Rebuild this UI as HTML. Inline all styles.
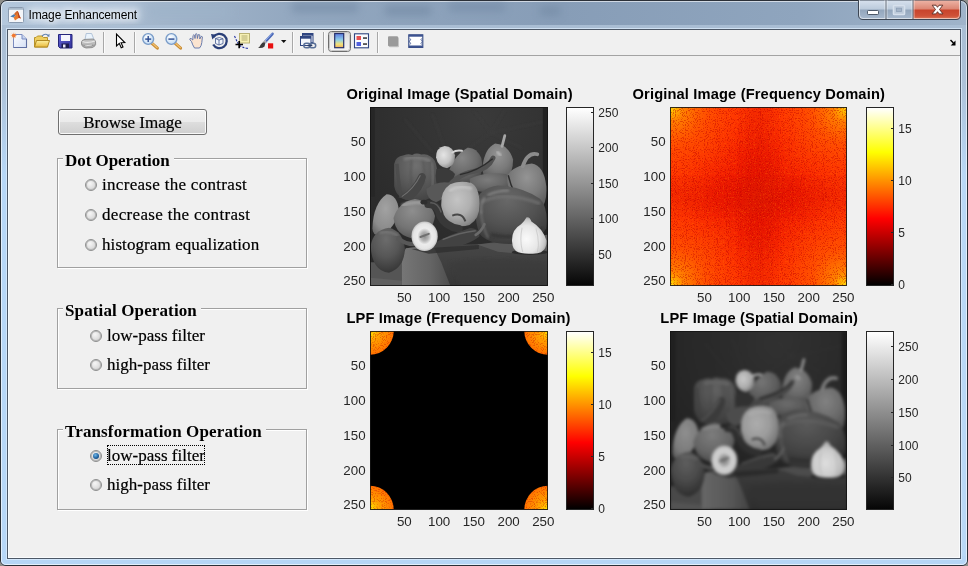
<!DOCTYPE html>
<html>
<head>
<meta charset="utf-8">
<title>Image Enhancement</title>
<style>
html,body{margin:0;padding:0;}
body{width:968px;height:566px;overflow:hidden;position:relative;background:#8e8e8a;font-family:"Liberation Sans",sans-serif;}
#frame{position:absolute;left:0;top:0;width:968px;height:566px;box-sizing:border-box;border-radius:7px 7px 6px 6px;
 background:linear-gradient(90deg,#b4c8dd 0px,#a6b9ce 130px,#92a7bf 300px,#879db7 560px,#8fa5be 800px,#a0b4ca 968px);
 border:1px solid #2b3038;overflow:hidden;}
#frame .hl{position:absolute;left:0;top:0;right:0;bottom:0;border:1px solid rgba(255,255,255,.6);border-radius:6px 6px 5px 5px;}
#frame .side{position:absolute;left:0;top:30px;right:0;bottom:0;background:linear-gradient(90deg,#b7d7f7 0,#b7d7f7 8px,transparent 8px,transparent 958px,#b9d8f6 958px);}
#frame .sideg{position:absolute;left:0;top:24px;right:0;height:150px;background:linear-gradient(180deg,#a9bdd3 0,#adc2d9 40%,rgba(183,215,247,0) 100%);}
#frame .bot{position:absolute;left:0;height:9px;right:0;bottom:0;background:#b6d6f6;}
#client{position:absolute;left:8px;top:30px;width:952px;height:528px;background:#f0f0f0;box-shadow:0 0 0 1px #4c5766, 0 0 0 2px rgba(220,236,252,0.75), inset 0 0 0 1px #f9fbfd;}
#toolbar{position:absolute;left:0;top:0;width:952px;height:25px;background:#f0f0f0;border-bottom:1px solid #a3a3a3;}
#title{position:absolute;left:28.5px;top:8px;font-size:12px;line-height:14px;color:#000;white-space:nowrap;letter-spacing:-0.13px;text-shadow:0 0 6px #fff,0 0 9px #fff,0 0 12px rgba(255,255,255,.9);}
.btn{position:absolute;left:58px;top:109px;width:149px;height:26px;box-sizing:border-box;border:1px solid #707070;border-radius:3px;
 background:linear-gradient(#f2f2f2 0%,#ebebeb 48%,#dddddd 52%,#cfcfcf 100%);box-shadow:inset 0 0 0 1px rgba(255,255,255,.85);}
.btn span{position:absolute;left:0;right:0;top:3px;text-align:center;font-family:"Liberation Serif",serif;font-size:17px;line-height:19px;color:#000;-webkit-text-stroke:0.2px #000;}
.panel{position:absolute;box-sizing:border-box;border:1px solid #a0a0a0;box-shadow:inset 1px 1px 0 #fff, 1px 1px 0 #fff;}
.ptitle{position:absolute;left:5px;top:-6.5px;height:16px;background:#f0f0f0;padding:0 4px 0 2px;font-family:"Liberation Serif",serif;font-weight:bold;font-size:17px;line-height:16px;color:#000;white-space:nowrap;}
.radio{position:absolute;width:10px;height:10px;border-radius:50%;border:1px solid #8e8f8f;background:radial-gradient(circle at 40% 35%,#f6f6f6 0,#dedede 55%,#c4c4c4 100%);box-shadow:inset 0 0 0 1px #b8b8b8;}
.radio.on:after{content:"";position:absolute;left:2px;top:2px;width:6px;height:6px;border-radius:50%;background:radial-gradient(circle at 40% 35%,#6fb7e8 0,#1b5c9a 60%,#12365f 100%);}
.rl{position:absolute;font-family:"Liberation Serif",serif;font-size:17px;line-height:19px;color:#000;white-space:nowrap;-webkit-text-stroke:0.2px #000;}
.tk{position:absolute;font-size:13.33px;line-height:14px;color:#262626;white-space:nowrap;}
.tk.cbl{font-size:12px;letter-spacing:0.1px;}
.tk.r{text-align:right;width:40px;}
.tk.c{text-align:center;width:40px;}
.ttl{position:absolute;font-size:14.67px;font-weight:bold;line-height:16px;color:#000;white-space:nowrap;letter-spacing:0.15px;}
.ax{position:absolute;box-sizing:border-box;}
.cb{position:absolute;box-sizing:border-box;border:1px solid #262626;}
svg{position:absolute;overflow:visible;}
</style>
</head>
<body>
<div id="root" style="position:absolute;left:0;top:0;width:968px;height:566px;will-change:transform;">
<div id="frame"><div class="side"></div><div class="sideg"></div><div class="bot"></div><div class="hl"></div></div>
<svg width="968" height="30" viewBox="0 0 968 30" style="left:0;top:0"><defs><linearGradient id="cbtn" x1="0" y1="0" x2="0" y2="1"><stop offset="0" stop-color="#d8e2ee"/><stop offset="0.45" stop-color="#bccbdc"/><stop offset="0.5" stop-color="#93a6bc"/><stop offset="1" stop-color="#a9bbd0"/></linearGradient><linearGradient id="cred" x1="0" y1="0" x2="0" y2="1"><stop offset="0" stop-color="#eeb6a8"/><stop offset="0.45" stop-color="#dc8674"/><stop offset="0.5" stop-color="#c8442c"/><stop offset="0.8" stop-color="#cf5238"/><stop offset="1" stop-color="#e08a6a"/></linearGradient><filter id="tblur"><feGaussianBlur stdDeviation="4"/></filter><clipPath id="capclip"><path d="M858.5,0 H960.5 V15 Q960.5,19.5 956,19.5 H863 Q858.5,19.5 858.5,15 Z"/></clipPath></defs><g filter="url(#tblur)" opacity="0.6"><rect x="292" y="3" width="66" height="9" fill="#6f86a2"/><rect x="385" y="6" width="46" height="9" fill="#6d849f"/><rect x="449" y="3" width="56" height="8" fill="#6f86a2"/><rect x="540" y="7" width="20" height="8" fill="#6d849f"/><rect x="150" y="6" width="80" height="12" fill="#9db3c9"/><rect x="30" y="4" width="110" height="18" fill="#c8d8ea"/></g><rect x="8.5" y="7.5" width="15" height="15" rx="1" fill="#f4f6f9" stroke="#8a9bb0" stroke-width="1"/><rect x="9" y="8" width="14" height="1.8" fill="#a9bacb"/><path d="M10.2,16.4 L14.2,14 L15.8,15.6 L13.6,17.6 Z" fill="#4a7fb4"/><path d="M14.2,14 Q16.2,11.5 17.2,10.9 Q18,11 18.6,13 Q19.6,16.5 20.9,18.6 Q19.6,17.6 18.4,18.2 Q16.8,19.2 15,20.4 Q14.4,19 13.6,17.6 Q14.8,16.6 15.8,15.6 Z" fill="#e87a2c"/><path d="M17.2,10.9 Q18,11 18.6,13 Q19.6,16.5 20.9,18.6 Q19.6,17.6 18.6,18 Q18.2,14.5 17.2,10.9 Z" fill="#b03a1e"/><path d="M14.2,14 Q16.2,11.5 17.2,10.9 Q17,13.5 15.8,15.6 Z" fill="#c8602a" opacity="0.8"/><g clip-path="url(#capclip)"><rect x="858" y="0" width="28" height="20" fill="url(#cbtn)"/><rect x="886" y="0" width="27" height="20" fill="url(#cbtn)"/><rect x="913" y="0" width="48" height="20" fill="url(#cred)"/></g><path d="M858.5,0 H960.5 V15 Q960.5,19.5 956,19.5 H863 Q858.5,19.5 858.5,15 Z" fill="none" stroke="#3c4654" stroke-width="1"/><path d="M859.5,0 V15 Q859.5,18.5 863,18.5 H956 Q959.5,18.5 959.5,15 V0" fill="none" stroke="rgba(255,255,255,0.55)" stroke-width="1"/><path d="M886,0 V19 M913,0 V19" stroke="#3c4654" stroke-width="1"/><path d="M887,0 V18.5 M885,0 V18.5 M914,0 V18.5 M912,0 V18.5" stroke="rgba(255,255,255,0.5)" stroke-width="1"/><rect x="867.5" y="10.5" width="11" height="4" rx="0.8" fill="#ffffff" stroke="#4c5868" stroke-width="1"/><rect x="893.5" y="5.5" width="11" height="9" rx="0.8" fill="#bccada" stroke="#d6e0ec" stroke-width="1.6"/><rect x="896.5" y="8.2" width="5" height="3.2" fill="#a4b4c8" stroke="#8d9fb6" stroke-width="0.8"/><path d="M932.2,5.2 L936,5.2 L937.5,7.3 L939,5.2 L942.8,5.2 L939.5,9.5 L943,13.9 L939.1,13.9 L937.5,11.7 L935.9,13.9 L932,13.9 L935.5,9.5 Z" fill="#ffffff" stroke="#5a2a22" stroke-width="0.9" stroke-linejoin="round"/></svg>
<div id="title">Image Enhancement</div>
<div id="client"><div id="toolbar"></div></div>
<svg width="968" height="60" viewBox="0 0 968 60" style="left:0;top:0"><defs><linearGradient id="tPage" x1="0" y1="0" x2="1" y2="1"><stop offset="0" stop-color="#ffffff"/><stop offset="1" stop-color="#d4dff5"/></linearGradient><linearGradient id="tFold" x1="0" y1="0" x2="0" y2="1"><stop offset="0" stop-color="#fdf0a0"/><stop offset="1" stop-color="#e9b93a"/></linearGradient><linearGradient id="tSave" x1="0" y1="0" x2="1" y2="1"><stop offset="0" stop-color="#6464d4"/><stop offset="1" stop-color="#32329a"/></linearGradient><linearGradient id="tCb" x1="0" y1="0" x2="0" y2="1"><stop offset="0" stop-color="#5a78e0"/><stop offset="0.45" stop-color="#8fd0e8"/><stop offset="0.75" stop-color="#f2e27a"/><stop offset="1" stop-color="#f0b060"/></linearGradient><linearGradient id="tPress" x1="0" y1="0" x2="0" y2="1"><stop offset="0" stop-color="#d9d9d9"/><stop offset="0.5" stop-color="#ececec"/><stop offset="1" stop-color="#f6f6f6"/></linearGradient><radialGradient id="tLens" cx="0.4" cy="0.35" r="0.7"><stop offset="0" stop-color="#ffffff"/><stop offset="1" stop-color="#bcd8f4"/></radialGradient></defs><rect x="103.0" y="32" width="1" height="21" fill="#a8a8a8"/><rect x="104.0" y="32" width="1" height="21" fill="#fbfbfb"/><rect x="134.0" y="32" width="1" height="21" fill="#a8a8a8"/><rect x="135.0" y="32" width="1" height="21" fill="#fbfbfb"/><rect x="292.0" y="32" width="1" height="21" fill="#a8a8a8"/><rect x="293.0" y="32" width="1" height="21" fill="#fbfbfb"/><rect x="323.0" y="32" width="1" height="21" fill="#a8a8a8"/><rect x="324.0" y="32" width="1" height="21" fill="#fbfbfb"/><rect x="377.0" y="32" width="1" height="21" fill="#a8a8a8"/><rect x="378.0" y="32" width="1" height="21" fill="#fbfbfb"/><path d="M13.5,34.5 H22 L26.5,39 V47.5 H13.5 Z" fill="url(#tPage)" stroke="#7b8cc0" stroke-width="1"/><path d="M22,34.5 V39 H26.5" fill="#c9d6f0" stroke="#7b8cc0" stroke-width="1"/><path d="M13.8,32.6 V38.6 M10.8,35.6 H16.8 M11.7,33.5 L15.9,37.7 M15.9,33.5 L11.7,37.7" stroke="#f4a870" stroke-width="0.7"/><circle cx="13.8" cy="35.6" r="1.9" fill="#f07830"/><path d="M26.5,39 V47.5 H13.5" fill="none" stroke="#5f6fa3" stroke-width="1.1"/><path d="M34.5,47 V37.5 H36 L37.5,36 H42 L43.5,37.5 H47.5 V47 Z" fill="#efcf60" stroke="#b8942c" stroke-width="1"/><path d="M34.5,47 L36.5,40.5 H49.5 L47.5,47 Z" fill="url(#tFold)" stroke="#b08820" stroke-width="1"/><path d="M42,36 Q45,32.8 48.3,35.4" fill="none" stroke="#6484b0" stroke-width="1.1"/><path d="M49.6,33.8 L49.3,37 L46.6,36 Z" fill="#6484b0"/><path d="M58.5,34.5 H72 V48 H60 L58.5,46.5 Z" fill="url(#tSave)" stroke="#24247a" stroke-width="1"/><rect x="61" y="35" width="9" height="6" fill="#f4f4fc"/><rect x="61.5" y="43.5" width="7.5" height="4.5" fill="#1c1c50"/><rect x="63" y="44.5" width="2.5" height="3" fill="#e8e8f8"/><path d="M84.8,40.5 L86.2,33.5 H91.6 L94,39.5 Z" fill="#eaf3fc" stroke="#9ab0cc" stroke-width="0.7"/><path d="M81.5,42 Q82,39.6 85,39.4 L93,39 Q95.6,40 95.6,42 V44.5 Q95,46.8 92,47.6 L86,48 Q82,47 81.5,44.5 Z" fill="#bdbdbd" stroke="#7c7c7c" stroke-width="0.8"/><path d="M82.5,41.5 Q88,43.5 95,41" fill="none" stroke="#e8e8e8" stroke-width="1.2"/><path d="M84,44.8 L92.5,44.2 L92,46.6 L85.5,47 Z" fill="#f2f2f2" stroke="#8a8a8a" stroke-width="0.5"/><path d="M82,44.5 Q87,48 95,44.8" fill="none" stroke="#8c8c8c" stroke-width="0.8"/><path d="M116.5,34 V46 L119.3,43.4 L121.2,47.8 L123,47 L121.1,42.7 L124.8,42.6 Z" fill="#ffffff" stroke="#000" stroke-width="1.1" stroke-linejoin="miter"/><path d="M152.0,43.3 L157.39999999999998,48.2" stroke="#c88a30" stroke-width="3" stroke-linecap="round"/><path d="M152.0,43 L157.2,47.7" stroke="#f0c070" stroke-width="1.2" stroke-linecap="round"/><circle cx="148.2" cy="39" r="5.4" fill="url(#tLens)" stroke="#7a9cc8" stroke-width="1.4"/><rect x="145.2" y="38.4" width="6" height="1.4" fill="#2a4a90"/><rect x="147.5" y="36" width="1.4" height="6" fill="#2a4a90"/><path d="M175.20000000000002,43.3 L180.6,48.2" stroke="#c88a30" stroke-width="3" stroke-linecap="round"/><path d="M175.20000000000002,43 L180.4,47.7" stroke="#f0c070" stroke-width="1.2" stroke-linecap="round"/><circle cx="171.4" cy="39" r="5.4" fill="url(#tLens)" stroke="#7a9cc8" stroke-width="1.4"/><rect x="168.4" y="38.4" width="6" height="1.4" fill="#2a4a90"/><path d="M191.5,41.5 Q189,39.5 190,38.6 Q191.2,38 192.8,40 L193,35.5 Q193.6,34.2 194.6,35.5 L195,38.5 L195.4,34.2 Q196.2,33 197,34.2 L197.4,38.5 L198.2,34.8 Q199,33.8 199.8,35 L199.8,39 L201,36.6 Q202,35.8 202.4,37 L201.8,42.5 Q201.5,46 199.5,48 H194.5 Q192.5,45 191.5,41.5 Z" fill="#fbe4d0" stroke="#5a70a8" stroke-width="0.9" stroke-linejoin="round"/><path d="M213.5,37 A7.2,7.2 0 1 1 213.2,44.5" fill="none" stroke="#2a3f78" stroke-width="2.3"/><path d="M211,34 L216.5,34.8 L212.4,39.6 Z" fill="#2a3f78"/><path d="M215.5,38.5 L219.5,37.5 L223,38.8 V43.5 L219,45 L215.5,43.5 Z M215.5,38.5 L219,40 L223,38.8 M219,40 V45" fill="#eef3fb" stroke="#44598f" stroke-width="0.8"/><rect x="239.5" y="33.5" width="10" height="9.5" fill="#f6f0b4" stroke="#b4ac6c" stroke-width="0.9"/><path d="M241.5,36 H247.5 M241.5,38 H247.5 M241.5,40 H247.5" stroke="#a49c62" stroke-width="0.8"/><path d="M234.5,36 L238,43.5 Q241,48 249,48.5" fill="none" stroke="#2030a0" stroke-width="1.1" stroke-dasharray="2.2,1.3"/><path d="M235.5,44.5 H243 M239.2,41 V48.2" stroke="#000" stroke-width="1.7"/><path d="M272.5,33.8 L265,42" stroke="#4a68b8" stroke-width="2.6" stroke-linecap="round"/><path d="M271.8,33.6 L265,41" stroke="#a8c0f0" stroke-width="0.9" stroke-linecap="round"/><path d="M265.8,40.8 L263.2,43.5" stroke="#b0b0b0" stroke-width="2.6"/><path d="M264.5,42.2 Q262,42 260.5,45 Q259.5,47.5 258,48 Q262.5,48.5 264.5,46.5 Q266,44.5 264.5,42.2 Z" fill="#3a3a3a"/><rect x="268" y="43.3" width="5.2" height="5.2" fill="#e81010"/><path d="M281,40 H286.4 L283.7,43 Z" fill="#111"/><rect x="302.5" y="33.5" width="10.5" height="9" fill="#f4f7fc" stroke="#2f4580" stroke-width="1"/><rect x="302.5" y="33.5" width="10.5" height="2.2" fill="#2f4580"/><rect x="300.5" y="36.5" width="10.5" height="9" fill="#f4f7fc" stroke="#2f4580" stroke-width="1"/><rect x="300.5" y="36.5" width="10.5" height="2.2" fill="#2f4580"/><rect x="303.8" y="43.2" width="6.5" height="4.6" rx="2.3" fill="none" stroke="#5a7098" stroke-width="1.5"/><rect x="309.2" y="43.2" width="6.5" height="4.6" rx="2.3" fill="none" stroke="#5a7098" stroke-width="1.5"/><rect x="307.5" y="44.8" width="4.8" height="1.4" fill="#2b3d66"/><rect x="328.5" y="31.5" width="22" height="20" rx="3" fill="url(#tPress)" stroke="#6e6e6e" stroke-width="1"/><rect x="329.5" y="32.5" width="20" height="18" rx="2" fill="none" stroke="#c8c8c8" stroke-width="1"/><rect x="334.7" y="33.5" width="9" height="14.2" fill="url(#tCb)" stroke="#27306a" stroke-width="1.2"/><rect x="354.5" y="33.8" width="14" height="14" fill="#fbfcff" stroke="#2f4580" stroke-width="1.1"/><rect x="356.5" y="36" width="4.5" height="4" fill="#e85050"/><rect x="356.5" y="42" width="4.5" height="4" fill="#5060e0"/><rect x="363" y="37.4" width="4" height="1.3" fill="#111"/><rect x="363" y="43.4" width="4" height="1.3" fill="#111"/><rect x="389" y="37.2" width="10" height="10" rx="1" fill="#c4c4c4"/><rect x="388" y="36.3" width="10" height="10" rx="1" fill="#9a9a9a"/><rect x="408.8" y="34.8" width="14" height="12.6" fill="#ffffff" stroke="#2f4580" stroke-width="1.1"/><rect x="408.8" y="34.8" width="14" height="1.9" fill="#3c5290"/><rect x="408.8" y="45.5" width="14" height="1.9" fill="#3c5290"/><path d="M410,38.5 q1.2,1 0,2 q-1.2,1 0,2 q1.2,1 0,2 M421.6,38.5 q-1.2,1 0,2 q1.2,1 0,2 q-1.2,1 0,2" fill="none" stroke="#3c5290" stroke-width="0.9"/><path d="M950.5,40 L953.5,43" stroke="#000" stroke-width="1.5"/><path d="M955.5,40.6 V45.4 H950.7 Z" fill="#000"/></svg>
<div class="btn"><span>Browse Image</span></div>
<div class="panel" style="left:57px;top:158px;width:250px;height:110px;"><div class="ptitle" style="letter-spacing:-0.05px">Dot Operation</div></div>
<div class="radio" style="left:85px;top:179px;"></div>
<div class="rl" style="left:102px;top:175px;letter-spacing:0.3px;">increase the contrast</div>
<div class="radio" style="left:85px;top:209px;"></div>
<div class="rl" style="left:102px;top:205px;letter-spacing:0.32px;">decrease the contrast</div>
<div class="radio" style="left:85px;top:239px;"></div>
<div class="rl" style="left:102px;top:235px;letter-spacing:0.09px;">histogram equalization</div>
<div class="panel" style="left:57px;top:308px;width:250px;height:81px;"><div class="ptitle" style="letter-spacing:0.12px">Spatial Operation</div></div>
<div class="radio" style="left:90px;top:330px;"></div>
<div class="rl" style="left:107px;top:326px;letter-spacing:0.02px;">low-pass filter</div>
<div class="radio" style="left:90px;top:359px;"></div>
<div class="rl" style="left:107px;top:355px;letter-spacing:0.03px;">high-pass filter</div>
<div class="panel" style="left:57px;top:429px;width:250px;height:81px;"><div class="ptitle" style="letter-spacing:0.13px">Transformation Operation</div></div>
<div class="radio on" style="left:90px;top:450px;"></div>
<div class="rl" style="left:107px;top:445px;letter-spacing:0.02px;outline:1px dotted #000;outline-offset:-1px;padding-top:1px;">low-pass filter</div>
<div class="radio" style="left:90px;top:479px;"></div>
<div class="rl" style="left:107px;top:475px;letter-spacing:0.03px;">high-pass filter</div>
<svg width="0" height="0" style="left:0;top:0"><defs><linearGradient id="gCloth" x1="0" y1="0" x2="0" y2="1"><stop offset="0" stop-color="#565656"/><stop offset="0.22" stop-color="#464646"/><stop offset="1" stop-color="#373737"/></linearGradient>
<linearGradient id="gClothL" x1="0" y1="0" x2="1" y2="0"><stop offset="0" stop-color="#767676"/><stop offset="0.6" stop-color="#646464"/><stop offset="1" stop-color="#4e4e4e"/></linearGradient>
<radialGradient id="gBg" cx="0.6" cy="0.1" r="0.75"><stop offset="0" stop-color="#3a3a3a"/><stop offset="0.6" stop-color="#303030"/><stop offset="1" stop-color="#292929"/></radialGradient>
<radialGradient id="gGar" cx="0.42" cy="0.6" r="0.62"><stop offset="0" stop-color="#fafafa"/><stop offset="0.6" stop-color="#e6e6e6"/><stop offset="0.85" stop-color="#c8c8c8"/><stop offset="1" stop-color="#9a9a9a"/></radialGradient>
<radialGradient id="gGar2" cx="0.4" cy="0.4" r="0.65"><stop offset="0" stop-color="#e4e4e4"/><stop offset="0.6" stop-color="#c4c4c4"/><stop offset="1" stop-color="#8a8a8a"/></radialGradient>
<radialGradient id="gMush" cx="0.5" cy="0.5" r="0.5"><stop offset="0" stop-color="#8c8c8c"/><stop offset="0.3" stop-color="#b4b4b4"/><stop offset="0.55" stop-color="#ececec"/><stop offset="0.85" stop-color="#e4e4e4"/><stop offset="1" stop-color="#c0c0c0"/></radialGradient>
<radialGradient id="gYel" cx="0.42" cy="0.4" r="0.7"><stop offset="0" stop-color="#c4c4c4"/><stop offset="0.5" stop-color="#b0b0b0"/><stop offset="0.85" stop-color="#8c8c8c"/><stop offset="1" stop-color="#707070"/></radialGradient>
<radialGradient id="gP1" cx="0.5" cy="0.25" r="0.8"><stop offset="0" stop-color="#707070"/><stop offset="0.5" stop-color="#5a5a5a"/><stop offset="1" stop-color="#404040"/></radialGradient>
<radialGradient id="gP2" cx="0.4" cy="0.3" r="0.75"><stop offset="0" stop-color="#868686"/><stop offset="0.6" stop-color="#6a6a6a"/><stop offset="1" stop-color="#4a4a4a"/></radialGradient>
<radialGradient id="gP3" cx="0.5" cy="0.3" r="0.8"><stop offset="0" stop-color="#949494"/><stop offset="0.5" stop-color="#7a7a7a"/><stop offset="1" stop-color="#525252"/></radialGradient>
<radialGradient id="gP4" cx="0.45" cy="0.35" r="0.8"><stop offset="0" stop-color="#7c7c7c"/><stop offset="0.5" stop-color="#686868"/><stop offset="1" stop-color="#484848"/></radialGradient>
<radialGradient id="gBig" cx="0.45" cy="0.25" r="0.85"><stop offset="0" stop-color="#686868"/><stop offset="0.5" stop-color="#525252"/><stop offset="1" stop-color="#343434"/></radialGradient>
<radialGradient id="gBL" cx="0.45" cy="0.25" r="0.8"><stop offset="0" stop-color="#6c6c6c"/><stop offset="0.5" stop-color="#565656"/><stop offset="1" stop-color="#323232"/></radialGradient>
<radialGradient id="gLY" cx="0.5" cy="0.35" r="0.7"><stop offset="0" stop-color="#a2a2a2"/><stop offset="0.7" stop-color="#8c8c8c"/><stop offset="1" stop-color="#6c6c6c"/></radialGradient>
<radialGradient id="gLM" cx="0.45" cy="0.3" r="0.75"><stop offset="0" stop-color="#8e8e8e"/><stop offset="0.6" stop-color="#747474"/><stop offset="1" stop-color="#525252"/></radialGradient>
<filter id="b1" x="-5%" y="-5%" width="110%" height="110%" color-interpolation-filters="sRGB"><feGaussianBlur stdDeviation="1.4"/></filter>
<filter id="b2" x="-5%" y="-5%" width="110%" height="110%" color-interpolation-filters="sRGB"><feGaussianBlur stdDeviation="4.2"/><feComponentTransfer><feFuncR type="linear" slope="0.9" intercept="-0.012"/><feFuncG type="linear" slope="0.9" intercept="-0.012"/><feFuncB type="linear" slope="0.9" intercept="-0.012"/></feComponentTransfer></filter>
<filter id="b3" x="-20%" y="-20%" width="140%" height="140%"><feGaussianBlur stdDeviation="2.5"/></filter>
<filter id="bs" x="-20%" y="-20%" width="140%" height="140%"><feGaussianBlur stdDeviation="5"/></filter><radialGradient id="hc0" gradientUnits="userSpaceOnUse" cx="0" cy="0" r="95"><stop offset="0" stop-color="#fff020"/><stop offset="0.05" stop-color="#ffc800" stop-opacity="0.95"/><stop offset="0.15" stop-color="#ff9000" stop-opacity="0.85"/><stop offset="0.4" stop-color="#ff6000" stop-opacity="0.6"/><stop offset="1" stop-color="#ff3000" stop-opacity="0"/></radialGradient>
<radialGradient id="lc0" gradientUnits="userSpaceOnUse" cx="0" cy="0" r="24"><stop offset="0" stop-color="#fff400"/><stop offset="0.15" stop-color="#ffd000"/><stop offset="0.4" stop-color="#ffa400"/><stop offset="0.75" stop-color="#ff8800"/><stop offset="1" stop-color="#ff7000"/></radialGradient>
<radialGradient id="hc1" gradientUnits="userSpaceOnUse" cx="178" cy="0" r="95"><stop offset="0" stop-color="#fff020"/><stop offset="0.05" stop-color="#ffc800" stop-opacity="0.95"/><stop offset="0.15" stop-color="#ff9000" stop-opacity="0.85"/><stop offset="0.4" stop-color="#ff6000" stop-opacity="0.6"/><stop offset="1" stop-color="#ff3000" stop-opacity="0"/></radialGradient>
<radialGradient id="lc1" gradientUnits="userSpaceOnUse" cx="178" cy="0" r="24"><stop offset="0" stop-color="#fff400"/><stop offset="0.15" stop-color="#ffd000"/><stop offset="0.4" stop-color="#ffa400"/><stop offset="0.75" stop-color="#ff8800"/><stop offset="1" stop-color="#ff7000"/></radialGradient>
<radialGradient id="hc2" gradientUnits="userSpaceOnUse" cx="0" cy="178" r="95"><stop offset="0" stop-color="#fff020"/><stop offset="0.05" stop-color="#ffc800" stop-opacity="0.95"/><stop offset="0.15" stop-color="#ff9000" stop-opacity="0.85"/><stop offset="0.4" stop-color="#ff6000" stop-opacity="0.6"/><stop offset="1" stop-color="#ff3000" stop-opacity="0"/></radialGradient>
<radialGradient id="lc2" gradientUnits="userSpaceOnUse" cx="0" cy="178" r="24"><stop offset="0" stop-color="#fff400"/><stop offset="0.15" stop-color="#ffd000"/><stop offset="0.4" stop-color="#ffa400"/><stop offset="0.75" stop-color="#ff8800"/><stop offset="1" stop-color="#ff7000"/></radialGradient>
<radialGradient id="hc3" gradientUnits="userSpaceOnUse" cx="178" cy="178" r="95"><stop offset="0" stop-color="#fff020"/><stop offset="0.05" stop-color="#ffc800" stop-opacity="0.95"/><stop offset="0.15" stop-color="#ff9000" stop-opacity="0.85"/><stop offset="0.4" stop-color="#ff6000" stop-opacity="0.6"/><stop offset="1" stop-color="#ff3000" stop-opacity="0"/></radialGradient>
<radialGradient id="lc3" gradientUnits="userSpaceOnUse" cx="178" cy="178" r="24"><stop offset="0" stop-color="#fff400"/><stop offset="0.15" stop-color="#ffd000"/><stop offset="0.4" stop-color="#ffa400"/><stop offset="0.75" stop-color="#ff8800"/><stop offset="1" stop-color="#ff7000"/></radialGradient>
<radialGradient id="hcen" gradientUnits="userSpaceOnUse" cx="89" cy="89" r="90"><stop offset="0" stop-color="#e20c00"/><stop offset="0.45" stop-color="#ee1400" stop-opacity="0.7"/><stop offset="1" stop-color="#fa2200" stop-opacity="0"/></radialGradient>
<filter id="bl6"><feGaussianBlur stdDeviation="9"/></filter>
<filter id="nz" x="0" y="0" width="100%" height="100%" color-interpolation-filters="sRGB"><feTurbulence type="fractalNoise" baseFrequency="0.9" numOctaves="1" seed="7" result="t"/><feColorMatrix type="matrix" values="0 0 0 0 0.74  0 0 0 0 0.0  0 0 0 0 0  8 8 0 0 -8.45"/></filter>
<filter id="nz2" x="0" y="0" width="100%" height="100%" color-interpolation-filters="sRGB"><feTurbulence type="fractalNoise" baseFrequency="0.8" numOctaves="1" seed="23" result="t"/><feColorMatrix type="matrix" values="0 0 0 0 1  0 0 0 0 0.42  0 0 0 0 0  0 6 6 0 -6.6"/></filter><g id="pepg"><rect x="0" y="0" width="581" height="566" fill="url(#gBg)"/>
<g stroke="#3e3e3e" stroke-width="4" opacity="0.6" fill="none" filter="url(#b3)"><path d="M330,30 L380,95 L300,150"/><path d="M380,95 L545,60"/><path d="M380,95 L470,140"/><path d="M130,55 L210,150"/><path d="M420,30 L380,95"/><path d="M210,40 L250,150"/></g>
<rect x="530" y="20" width="20" height="400" fill="#222222"/>
<rect x="30" y="20" width="14" height="260" fill="#262626"/>
<path d="M30,470 L150,470 L150,540 L30,540 Z" fill="#555555"/>
<path d="M30,515 L130,525 L130,540 L30,540 Z" fill="#606060"/>
<path d="M122,452 L134,430 L200,422 L340,418 L440,414 L545,390 L545,538 L122,538 Z" fill="url(#gCloth)"/>
<path d="M122,452 L134,430 L212,421 L236,470 L262,538 L122,538 Z" fill="url(#gClothL)"/>
<path d="M340,419 L545,392 L545,436 L470,446 L400,440 Z" fill="#5a5a5a" opacity="0.9"/>
<path d="M260,470 Q400,450 545,470 L545,538 L290,538 Z" fill="#3a3a3a" opacity="0.55" filter="url(#bs)"/>
<path d="M100,185 Q103,163 128,160 Q140,154 152,159 Q165,152 178,158 Q192,154 204,163 Q220,170 224,200 Q230,235 220,262 Q208,294 160,294 Q108,292 100,250 Z" fill="url(#gP1)"/>
<path d="M108,185 Q112,240 120,280" stroke="#4a4a4a" stroke-width="10" fill="none" opacity="0.7"/>
<path filter="url(#b3)" d="M150,165 Q146,210 150,250 M182,165 Q190,210 186,250" stroke="#4a4a4a" stroke-width="4" fill="none" opacity="0.6"/>
<path filter="url(#b3)" d="M208,180 Q216,220 210,262" stroke="#7a7a7a" stroke-width="6" fill="none" opacity="0.6"/>
<path filter="url(#b3)" d="M128,172 Q160,160 205,176" stroke="#7e7e7e" stroke-width="9" fill="none" opacity="0.8"/>
<path filter="url(#b3)" d="M150,195 L176,195" stroke="#a0a0a0" stroke-width="5" stroke-linecap="round"/>
<path d="M112,282 Q150,262 172,215 Q186,205 192,222 Q186,262 146,292 Z" fill="#464646"/>
<path d="M122,280 Q156,258 176,218" stroke="#707070" stroke-width="3" fill="none"/>
<path d="M258,205 Q275,158 312,138 Q338,136 352,168 Q360,200 345,228 Q310,244 275,236 Q258,228 258,205 Z" fill="url(#gP2)"/>
<path d="M221,166 Q221,137 246,133 Q272,135 276,160 Q277,190 253,198 Q226,194 221,166 Z" fill="url(#gGar2)"/>
<path d="M268,152 Q280,144 296,147" stroke="#d4d4d4" stroke-width="6" fill="none" stroke-linecap="round"/>
<path d="M356,190 Q362,140 392,126 Q430,128 444,172 Q444,215 420,232 Q385,242 362,225 Q354,210 356,190 Z" fill="url(#gP3)"/>
<path d="M412,134 L420,103" stroke="#a6a6a6" stroke-width="8" stroke-linecap="round"/>
<path filter="url(#b3)" d="M398,150 L408,160" stroke="#c8c8c8" stroke-width="5" stroke-linecap="round"/>
<path d="M222,200 Q258,192 276,214 Q266,252 236,264 Q214,242 222,200 Z" fill="#3a3a3a"/>
<path d="M318,228 Q360,206 424,214 Q446,236 424,264 Q360,274 322,258 Z" fill="url(#gP4)"/>
<path d="M243,272 Q272,218 330,207 Q372,200 386,168" stroke="#525252" stroke-width="14" fill="none" stroke-linecap="round"/>
<path d="M290,216 Q342,206 385,170" stroke="#2c2c2c" stroke-width="4" fill="none"/>
<path d="M428,218 Q445,190 498,184 Q534,190 540,250 Q543,300 522,318 Q470,312 440,272 Q423,242 428,218 Z" fill="url(#gP3)"/>
<path d="M472,192 Q486,150 514,157" stroke="#8c8c8c" stroke-width="11" fill="none" stroke-linecap="round"/>
<path d="M430,218 Q436,245 448,268" stroke="#2e2e2e" stroke-width="4" fill="none"/>
<path d="M338,292 Q348,256 400,248 Q470,250 522,286 Q546,312 540,372 Q520,412 440,417 Q370,419 346,386 Q330,340 338,292 Z" fill="url(#gBig)"/>
<path filter="url(#b3)" d="M352,296 Q420,262 522,300" stroke="#767676" stroke-width="10" fill="none" opacity="0.65"/>
<path filter="url(#b3)" d="M372,275 Q400,262 430,262" stroke="#a0a0a0" stroke-width="6" fill="none" opacity="0.6" stroke-linecap="round"/>
<path filter="url(#b3)" d="M352,330 Q348,300 362,282" stroke="#8a8a8a" stroke-width="7" fill="none" opacity="0.6"/>
<path filter="url(#b3)" d="M350,320 Q356,370 372,400" stroke="#787878" stroke-width="6" fill="none" opacity="0.6"/>
<path filter="url(#b3)" d="M380,390 Q450,408 530,372" stroke="#2e2e2e" stroke-width="10" fill="none" opacity="0.6"/>
<path d="M193,258 Q224,232 264,240 Q252,286 220,297 Q194,288 193,258 Z" fill="#585858"/>
<path d="M236,305 Q234,262 262,244 Q290,232 322,240 Q346,252 347,300 Q348,345 318,362 Q290,370 262,360 Q238,345 236,305 Z" fill="url(#gYel)"/>
<path filter="url(#b3)" d="M262,262 Q290,245 322,256" stroke="#d2d2d2" stroke-width="8" fill="none" opacity="0.6" stroke-linecap="round"/>
<path d="M37,372 Q39,300 78,273 Q108,274 113,316 Q106,372 60,393 Q37,394 37,372 Z" fill="url(#gLY)"/>
<path d="M98,342 Q112,296 160,287 Q206,292 218,336 Q212,386 160,402 Q104,396 98,342 Z" fill="url(#gLM)"/>
<path filter="url(#b3)" d="M125,305 Q155,292 190,300" stroke="#a8a8a8" stroke-width="9" fill="none" opacity="0.75" stroke-linecap="round"/>
<path d="M198,302 Q226,300 233,336 Q246,366 287,373" stroke="#383838" stroke-width="22" fill="none" stroke-linecap="round"/>
<path d="M204,298 Q226,296 236,326" stroke="#5c5c5c" stroke-width="4" fill="none"/>
<path d="M268,335 Q296,324 306,352" stroke="#484848" stroke-width="6" fill="none"/>
<ellipse cx="186" cy="296" rx="10" ry="7" fill="#2e2e2e"/>
<path d="M32,422 Q40,376 85,370 Q126,380 131,432 Q129,486 85,501 Q35,496 32,422 Z" fill="url(#gBL)"/>
<path filter="url(#b3)" d="M60,385 Q85,378 110,392" stroke="#8a8a8a" stroke-width="6" fill="none" opacity="0.6" stroke-linecap="round"/>
<path d="M112,402 Q136,420 162,418" stroke="#585858" stroke-width="12" fill="none" stroke-linecap="round"/>
<path d="M213,416 Q260,390 320,371 Q352,374 346,396 Q300,430 224,431 Z" fill="#424242"/>
<path d="M240,405 Q290,384 336,379" stroke="#6c6c6c" stroke-width="4" fill="none" opacity="0.8"/>
<path d="M336,391 Q353,380 361,360" stroke="#6a6a6a" stroke-width="8" fill="none" stroke-linecap="round"/>
<path d="M150,432 L345,420 L345,432 L200,446 Z" fill="#2c2c2c" opacity="0.7"/>
<ellipse cx="188" cy="395" rx="38" ry="43" fill="url(#gMush)"/>
<path d="M176,397 L200,388" stroke="#707070" stroke-width="6" stroke-linecap="round"/>
<ellipse cx="492" cy="441" rx="52" ry="8" fill="#2c2c2c"/>
<path d="M441,410 Q439,376 467,360 Q478,350 483,340 Q492,337 497,352 Q530,372 541,408 Q541,440 515,444 Q470,449 452,438 Q441,428 441,410 Z" fill="url(#gGar)"/>
<path d="M470,370 Q462,410 472,440 M510,372 Q522,410 514,442" stroke="#c4c4c4" stroke-width="3" fill="none" opacity="0.7"/></g></defs></svg>
<div class="ttl" style="left:346.5px;top:85.5px;">Original Image (Spatial Domain)</div>
<div class="ax" style="left:370px;top:107px;width:178px;height:178.6px;overflow:hidden;"><svg width="100%" height="100%" viewBox="30 20 515 518" preserveAspectRatio="none" style="left:0;top:0;overflow:hidden"><rect x="0" y="0" width="600" height="600" fill="#2c2c2c"/><use href="#pepg" filter="url(#b1)"/></svg><div style="position:absolute;left:0;top:0;right:0;bottom:0;border:1px solid rgba(20,20,20,0.85);box-sizing:border-box;"></div></div>
<div class="tk r" style="left:325.6px;top:135.4px;">50</div>
<div class="tk c" style="left:384.3px;top:291.3px;">50</div>
<div class="tk r" style="left:325.6px;top:170.1px;">100</div>
<div class="tk c" style="left:419.1px;top:291.3px;">100</div>
<div class="tk r" style="left:325.6px;top:204.9px;">150</div>
<div class="tk c" style="left:453.8px;top:291.3px;">150</div>
<div class="tk r" style="left:325.6px;top:239.6px;">200</div>
<div class="tk c" style="left:488.6px;top:291.3px;">200</div>
<div class="tk r" style="left:325.6px;top:274.4px;">250</div>
<div class="tk c" style="left:523.3px;top:291.3px;">250</div>
<div class="cb" style="left:566.1px;top:107px;width:27.8px;height:178.7px;background:linear-gradient(to top,#060606,#ffffff);"></div>
<div class="tk cbl" style="left:598.3000000000001px;top:105.6px;">250</div>
<div style="position:absolute;left:591.1px;top:111.6px;width:3px;height:1px;background:#262626;"></div>
<div class="tk cbl" style="left:598.3000000000001px;top:141.1px;">200</div>
<div style="position:absolute;left:591.1px;top:147.1px;width:3px;height:1px;background:#262626;"></div>
<div class="tk cbl" style="left:598.3000000000001px;top:176.7px;">150</div>
<div style="position:absolute;left:591.1px;top:182.7px;width:3px;height:1px;background:#262626;"></div>
<div class="tk cbl" style="left:598.3000000000001px;top:212.4px;">100</div>
<div style="position:absolute;left:591.1px;top:218.4px;width:3px;height:1px;background:#262626;"></div>
<div class="tk cbl" style="left:598.3000000000001px;top:248.4px;">50</div>
<div style="position:absolute;left:591.1px;top:254.4px;width:3px;height:1px;background:#262626;"></div>
<div class="ttl" style="left:632.5px;top:85.5px;">Original Image (Frequency Domain)</div>
<div class="ax" style="left:670px;top:107px;width:176.8px;height:178.6px;overflow:hidden;"><svg width="100%" height="100%" viewBox="0 0 178 178" preserveAspectRatio="none" style="left:0;top:0;overflow:hidden"><rect width="178" height="178" fill="#ff3200"/><rect width="178" height="178" fill="url(#hcen)"/><rect x="72" y="-20" width="34" height="218" fill="#d00a00" opacity="0.25" filter="url(#bl6)"/><rect x="-20" y="72" width="218" height="34" fill="#d00a00" opacity="0.25" filter="url(#bl6)"/><path d="M178,0 L0,178" stroke="#ff6a00" stroke-width="9" opacity="0.22" filter="url(#bl6)"/><path d="M0,0 L178,178" stroke="#ff6a00" stroke-width="9" opacity="0.12" filter="url(#bl6)"/><rect width="178" height="178" fill="url(#hc0)"/><rect width="178" height="178" fill="url(#hc1)"/><rect width="178" height="178" fill="url(#hc2)"/><rect width="178" height="178" fill="url(#hc3)"/><rect width="178" height="178" filter="url(#nz2)" opacity="0.3"/><rect width="178" height="178" filter="url(#nz)" opacity="0.42"/></svg><div style="position:absolute;left:0;top:0;right:0;bottom:0;border:1px solid rgba(20,20,20,0.85);box-sizing:border-box;"></div></div>
<div class="tk r" style="left:625.6px;top:135.4px;">50</div>
<div class="tk c" style="left:684.4px;top:291.3px;">50</div>
<div class="tk r" style="left:625.6px;top:170.1px;">100</div>
<div class="tk c" style="left:719.2px;top:291.3px;">100</div>
<div class="tk r" style="left:625.6px;top:204.9px;">150</div>
<div class="tk c" style="left:753.9px;top:291.3px;">150</div>
<div class="tk r" style="left:625.6px;top:239.6px;">200</div>
<div class="tk c" style="left:788.7px;top:291.3px;">200</div>
<div class="tk r" style="left:625.6px;top:274.4px;">250</div>
<div class="tk c" style="left:823.4px;top:291.3px;">250</div>
<div class="cb" style="left:866.1px;top:107px;width:27.8px;height:178.7px;background:linear-gradient(to top,#000 0%,#ff0000 37.5%,#ffff00 75%,#ffffff 100%);"></div>
<div class="tk cbl" style="left:898.3000000000001px;top:122.2px;">15</div>
<div style="position:absolute;left:891.1px;top:128.2px;width:3px;height:1px;background:#262626;"></div>
<div class="tk cbl" style="left:898.3000000000001px;top:174.1px;">10</div>
<div style="position:absolute;left:891.1px;top:180.1px;width:3px;height:1px;background:#262626;"></div>
<div class="tk cbl" style="left:898.3000000000001px;top:226.1px;">5</div>
<div style="position:absolute;left:891.1px;top:232.1px;width:3px;height:1px;background:#262626;"></div>
<div class="tk cbl" style="left:898.3000000000001px;top:278.0px;">0</div>
<div style="position:absolute;left:891.1px;top:284.0px;width:3px;height:1px;background:#262626;"></div>
<div class="ttl" style="left:346.5px;top:309.5px;">LPF Image (Frequency Domain)</div>
<div class="ax" style="left:370px;top:331px;width:178px;height:178.6px;overflow:hidden;"><svg width="100%" height="100%" viewBox="0 0 178 178" preserveAspectRatio="none" style="left:0;top:0;overflow:hidden"><rect width="178" height="178" fill="#000"/><defs><clipPath id="lclip"><circle cx="0" cy="0" r="23.7"/><circle cx="178" cy="0" r="23.7"/><circle cx="0" cy="178" r="23.7"/><circle cx="178" cy="178" r="23.7"/></clipPath></defs><g clip-path="url(#lclip)"><rect x="0" y="0" width="30" height="30" fill="url(#lc0)"/><rect x="148" y="0" width="30" height="30" fill="url(#lc1)"/><rect x="0" y="148" width="30" height="30" fill="url(#lc2)"/><rect x="148" y="148" width="30" height="30" fill="url(#lc3)"/><rect width="178" height="178" filter="url(#nz2)" opacity="0.5"/><rect width="178" height="178" filter="url(#nz)" opacity="0.3"/></g></svg><div style="position:absolute;left:0;top:0;right:0;bottom:0;border:1px solid rgba(20,20,20,0.85);box-sizing:border-box;"></div></div>
<div class="tk r" style="left:325.6px;top:359.4px;">50</div>
<div class="tk c" style="left:384.3px;top:515.3px;">50</div>
<div class="tk r" style="left:325.6px;top:394.1px;">100</div>
<div class="tk c" style="left:419.1px;top:515.3px;">100</div>
<div class="tk r" style="left:325.6px;top:428.9px;">150</div>
<div class="tk c" style="left:453.8px;top:515.3px;">150</div>
<div class="tk r" style="left:325.6px;top:463.6px;">200</div>
<div class="tk c" style="left:488.6px;top:515.3px;">200</div>
<div class="tk r" style="left:325.6px;top:498.4px;">250</div>
<div class="tk c" style="left:523.3px;top:515.3px;">250</div>
<div class="cb" style="left:566.1px;top:331px;width:27.8px;height:178.7px;background:linear-gradient(to top,#000 0%,#ff0000 37.5%,#ffff00 75%,#ffffff 100%);"></div>
<div class="tk cbl" style="left:598.3000000000001px;top:346.2px;">15</div>
<div style="position:absolute;left:591.1px;top:352.2px;width:3px;height:1px;background:#262626;"></div>
<div class="tk cbl" style="left:598.3000000000001px;top:398.1px;">10</div>
<div style="position:absolute;left:591.1px;top:404.1px;width:3px;height:1px;background:#262626;"></div>
<div class="tk cbl" style="left:598.3000000000001px;top:450.1px;">5</div>
<div style="position:absolute;left:591.1px;top:456.1px;width:3px;height:1px;background:#262626;"></div>
<div class="tk cbl" style="left:598.3000000000001px;top:502.0px;">0</div>
<div style="position:absolute;left:591.1px;top:508.0px;width:3px;height:1px;background:#262626;"></div>
<div class="ttl" style="left:660.3px;top:309.5px;">LPF Image (Spatial Domain)</div>
<div class="ax" style="left:670px;top:331px;width:176.8px;height:178.6px;overflow:hidden;"><svg width="100%" height="100%" viewBox="30 20 515 518" preserveAspectRatio="none" style="left:0;top:0;overflow:hidden"><rect x="0" y="0" width="600" height="600" fill="#2c2c2c"/><use href="#pepg" filter="url(#b2)"/></svg><div style="position:absolute;left:0;top:0;right:0;bottom:0;border:1px solid rgba(20,20,20,0.85);box-sizing:border-box;"></div></div>
<div class="tk r" style="left:625.6px;top:359.4px;">50</div>
<div class="tk c" style="left:684.4px;top:515.3px;">50</div>
<div class="tk r" style="left:625.6px;top:394.1px;">100</div>
<div class="tk c" style="left:719.2px;top:515.3px;">100</div>
<div class="tk r" style="left:625.6px;top:428.9px;">150</div>
<div class="tk c" style="left:753.9px;top:515.3px;">150</div>
<div class="tk r" style="left:625.6px;top:463.6px;">200</div>
<div class="tk c" style="left:788.7px;top:515.3px;">200</div>
<div class="tk r" style="left:625.6px;top:498.4px;">250</div>
<div class="tk c" style="left:823.4px;top:515.3px;">250</div>
<div class="cb" style="left:866.1px;top:331px;width:27.8px;height:178.7px;background:linear-gradient(to top,#060606,#ffffff);"></div>
<div class="tk cbl" style="left:898.3000000000001px;top:340.1px;">250</div>
<div style="position:absolute;left:891.1px;top:346.1px;width:3px;height:1px;background:#262626;"></div>
<div class="tk cbl" style="left:898.3000000000001px;top:372.9px;">200</div>
<div style="position:absolute;left:891.1px;top:378.9px;width:3px;height:1px;background:#262626;"></div>
<div class="tk cbl" style="left:898.3000000000001px;top:405.7px;">150</div>
<div style="position:absolute;left:891.1px;top:411.7px;width:3px;height:1px;background:#262626;"></div>
<div class="tk cbl" style="left:898.3000000000001px;top:438.5px;">100</div>
<div style="position:absolute;left:891.1px;top:444.5px;width:3px;height:1px;background:#262626;"></div>
<div class="tk cbl" style="left:898.3000000000001px;top:471.3px;">50</div>
<div style="position:absolute;left:891.1px;top:477.3px;width:3px;height:1px;background:#262626;"></div>
</div>
</body>
</html>
